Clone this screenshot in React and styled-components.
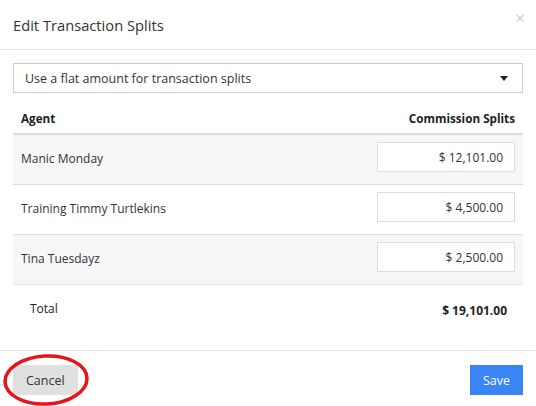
import React from "react";
import styled, { createGlobalStyle } from "styled-components";

const Global = createGlobalStyle`
  html, body { margin: 0; padding: 0; background: #fff; }
  body { font-family: "Open Sans", "Noto Sans", sans-serif; color: #333; }
  * { box-sizing: border-box; }
`;

const Modal = styled.div`
  position: relative;
  width: 536px;
  height: 406px;
  background: #fff;
  display: flex;
  flex-direction: column;
`;

const Header = styled.div`
  height: 50px;
  padding: 0 13px;
  display: flex;
  align-items: center;
  justify-content: space-between;
  border-bottom: 1px solid #e5e5e5;
`;

const Title = styled.h4`
  margin: 0;
  font-size: 14.7px;
  font-weight: 400;
  color: #333;
  line-height: 20px;
`;

const Close = styled.span`
  font-size: 17px;
  line-height: 1;
  color: #c8c8c8;
  margin-top: -14px;
  margin-right: -2px;
`;

const Body = styled.div`
  padding: 13px 13px 15px;
  flex: 1;
`;

const Select = styled.div`
  height: 30px;
  border: 1px solid #ccc;
  padding: 0 11px;
  display: flex;
  align-items: center;
  justify-content: space-between;
  font-size: 12.5px;
  color: #333;
`;

const Caret = styled.span`
  width: 0;
  height: 0;
  border-left: 4.5px solid transparent;
  border-right: 4.5px solid transparent;
  border-top: 5px solid #222;
  margin-right: 3px;
`;

const Table = styled.div`
  margin-top: 10px;
  display: flex;
  flex-direction: column;
`;

const HeadRow = styled.div`
  height: 32px;
  padding: 0 8px;
  display: flex;
  align-items: center;
  justify-content: space-between;
  border-bottom: 2px solid #ddd;
  font-size: 11.7px;
  font-weight: 700;
  color: #222;
`;

const Row = styled.div`
  height: 50px;
  padding: 7px 8px 0;
  display: flex;
  align-items: flex-start;
  justify-content: space-between;
  background: ${(p) => (p.$striped ? "#f7f7f7" : "#fff")};
  border-bottom: 1px solid ${(p) => (p.$last ? "#dde3ea" : "#ddd")};
`;

const Name = styled.span`
  font-size: 12px;
  color: #333;
  line-height: 30px;
  margin-top: 2px;
`;

const AmountInput = styled.div`
  width: 138px;
  height: 30px;
  border: 1px solid #ddd;
  background: #fff;
  padding: 0 11px;
  display: flex;
  align-items: center;
  justify-content: flex-end;
  font-size: 12px;
  color: #333;
`;

const TotalRow = styled.div`
  height: 50px;
  padding: 0 16px 0 17px;
  display: flex;
  align-items: center;
  justify-content: space-between;
`;

const TotalLabel = styled.span`
  font-size: 12px;
  color: #222;
  margin-top: -3px;
`;

const TotalValue = styled.span`
  font-size: 12px;
  font-weight: 700;
  color: #222;
`;

const Footer = styled.div`
  border-top: 1px solid #e5e5e5;
  padding: 14px 13px 11px;
  display: flex;
  justify-content: space-between;
  align-items: center;
`;

const Button = styled.button`
  height: 30px;
  padding: 0 13px;
  border: none;
  border-radius: 0;
  font-family: inherit;
  font-size: 12.5px;
  background: ${(p) => (p.$primary ? "#3a84f5" : "#e0e0e0")};
  color: ${(p) => (p.$primary ? "#fff" : "#333")};
`;

const Annotation = styled.svg`
  position: absolute;
  left: 0;
  top: 350px;
  pointer-events: none;
`;

const rows = [
  { name: "Manic Monday", amount: "$ 12,101.00" },
  { name: "Training Timmy Turtlekins", amount: "$ 4,500.00" },
  { name: "Tina Tuesdayz", amount: "$ 2,500.00" },
];

export default function App() {
  return (
    <>
      <Global />
      <Modal>
        <Header>
          <Title>Edit Transaction Splits</Title>
          <Close>×</Close>
        </Header>
        <Body>
          <Select>
            <span>Use a flat amount for transaction splits</span>
            <Caret />
          </Select>
          <Table>
            <HeadRow>
              <span>Agent</span>
              <span>Commission Splits</span>
            </HeadRow>
            {rows.map((r, i) => (
              <Row key={r.name} $striped={i % 2 === 0} $last={i === rows.length - 1}>
                <Name>{r.name}</Name>
                <AmountInput>{r.amount}</AmountInput>
              </Row>
            ))}
            <TotalRow>
              <TotalLabel>Total</TotalLabel>
              <TotalValue>$ 19,101.00</TotalValue>
            </TotalRow>
          </Table>
        </Body>
        <Footer>
          <Button>Cancel</Button>
          <Button $primary>Save</Button>
        </Footer>
        <Annotation width="100" height="56" viewBox="0 0 100 56">
          <ellipse cx="46" cy="30" rx="41" ry="24" fill="none" stroke="#e8141b" strokeWidth="3.5" transform="rotate(-3 46 30)" />
        </Annotation>
      </Modal>
    </>
  );
}
